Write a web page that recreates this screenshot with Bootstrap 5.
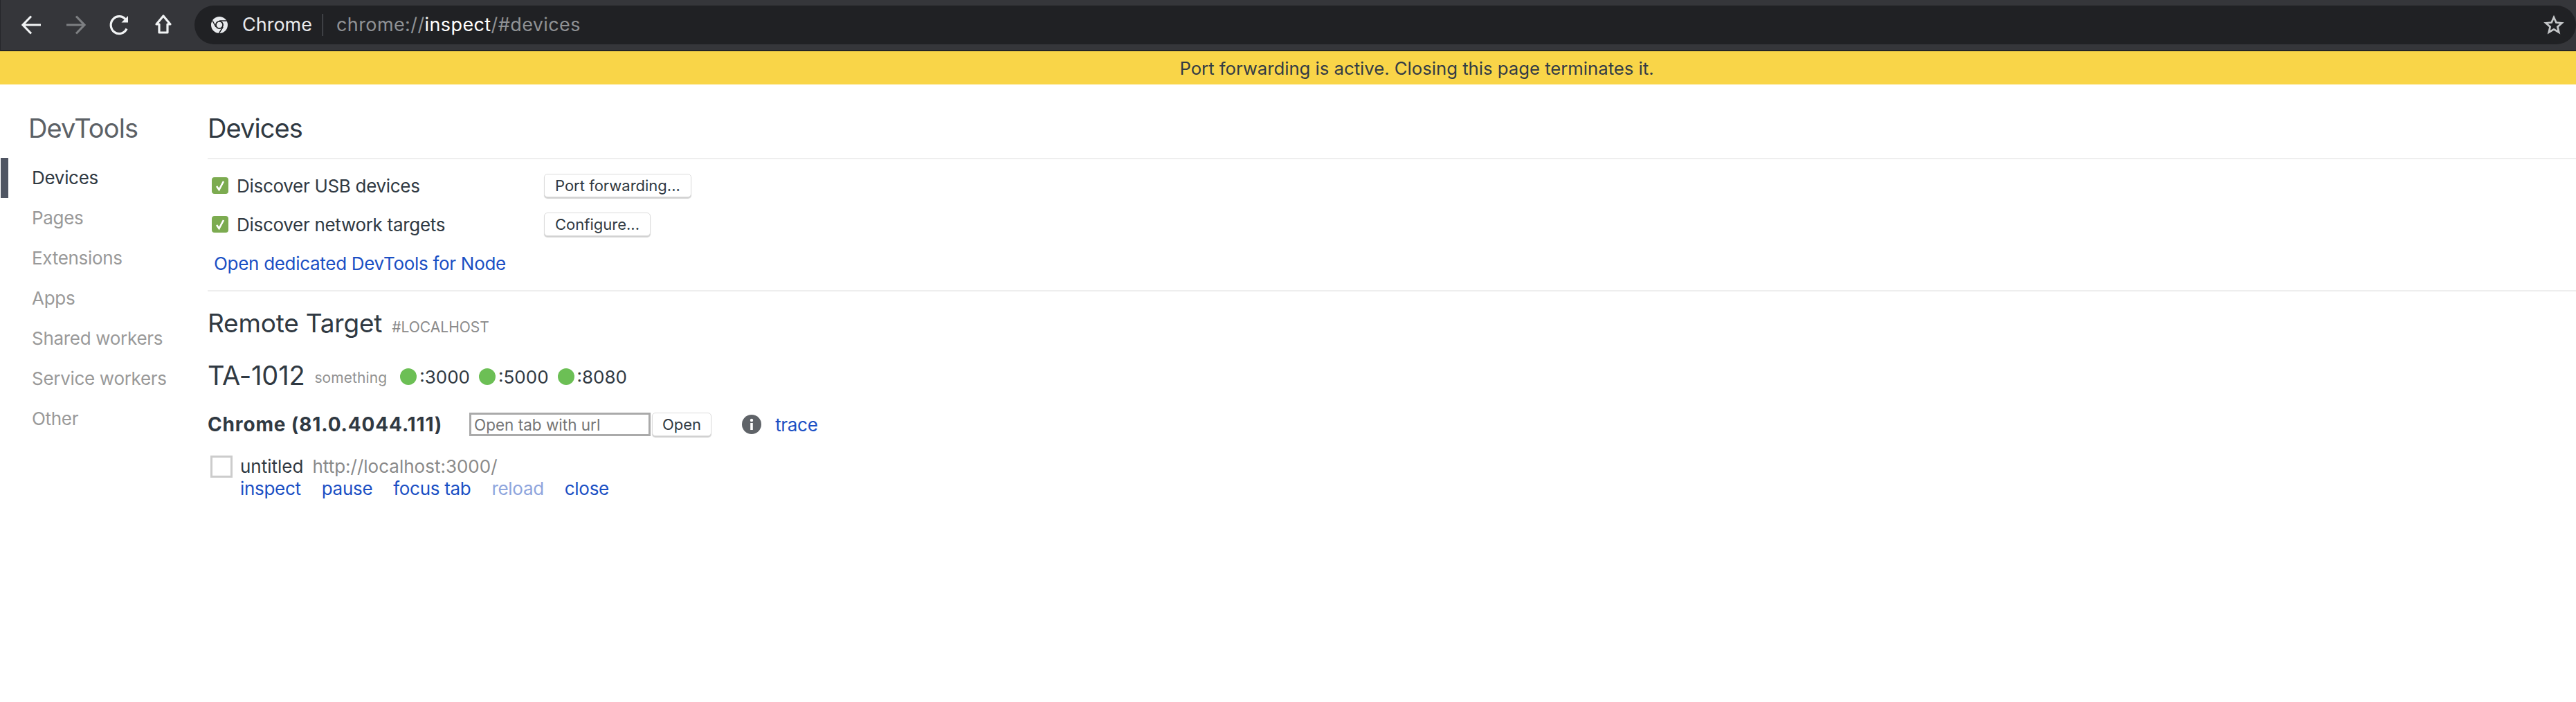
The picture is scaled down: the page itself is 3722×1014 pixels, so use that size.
<!doctype html>
<html lang="en"><head><meta charset="utf-8"><title>Inspect with Chrome Developer Tools</title>
<link href="https://cdn.jsdelivr.net/npm/bootstrap@5.3.0/dist/css/bootstrap.min.css" rel="stylesheet">
<style>
html,body{height:100%}
body{font-family:Inter,"Liberation Sans",sans-serif;font-size:26px;letter-spacing:-.3px;color:#303942;background:#fff;overflow:hidden}
.tbar{height:74px;background:#35363a;border-bottom:2px solid #232427;padding:8px 0 0 30px;border-left:1px solid #26272a}
.tbtn{display:block;flex:none;margin-top:8px}
.fwd{margin-left:37px}.rel{margin-left:33px}.hom{margin-left:35px}
.omni{height:56px;background:#202124;border-radius:28px;margin-left:31px;padding:0 17px 0 24px;font-size:27px;letter-spacing:0;color:#8f9194}
.omni .who{color:#e8eaed;margin-left:21px}
.omni .sep{width:1px;height:32px;background:#5f6368;margin:0 19px 0 15px}
.omni .addr{letter-spacing:.4px}
.omni b{font-weight:400;color:#fff}
.warnbar{height:48px;background:#f9d548;color:#333b45;font-size:25.7px;letter-spacing:0;line-height:49px;text-align:center;padding-left:372px}
.shell{min-height:0}
.side{width:300px;flex:none}
.side h1,.mainp h1{font-size:38px;line-height:50px;font-weight:400;letter-spacing:-.9px;margin:0;padding-top:38px;height:106px}
.side h1{padding-left:41px;color:#5c6166}
.navi{height:58px;line-height:58px;padding-left:46px;color:#999;display:block;text-decoration:none}
.navi.on{color:#303942;border-left:11px solid #4f5562;padding-left:34px;margin-left:1px}
.mainp{min-width:0;flex:1}
.mainp h1{color:#303942}
.rule{height:2px;background:#eee}
.rule2{margin-top:11px}
.setwrap{padding-top:10px}
.setrow{height:56px;padding-left:6px}
.nodelink{padding-left:9px}
.tick{width:24px;height:24px;border-radius:4px;background:#7cab50;flex:none;margin-right:12px}
.lab{width:444px}
.dbtn{font-size:22px;letter-spacing:0;line-height:30px;padding:0 15px;height:34px;background:#fff;color:#303942;border:1px solid #dcdcdc;border-radius:5px;box-shadow:0 2px 1px rgba(0,0,0,.18)}
.dbtn:hover{background:#fff;color:#303942;border-color:#dcdcdc}
a.lnk{color:#1a4fc4;text-decoration:none}
a.off{color:#8ea5dd}
.h2t{font-size:37px;line-height:50px;letter-spacing:-.2px;font-weight:400;margin:21px 0 0}
.tiny{font-size:21px;letter-spacing:0;color:#8a8a8a;margin-left:14px}
.tarow{margin-top:21px;height:50px}
.tname{font-size:38px;line-height:50px;letter-spacing:-.2px;position:relative;top:-2px}
.subt{font-size:21px;letter-spacing:.1px;color:#919191;margin:0 19px 0 14px;position:relative;top:2px}
.dot{width:24px;height:24px;border-radius:50%;background:#6cbf55;display:inline-block;margin-right:4px;flex:none}
.pt{margin-right:13px;font-size:26px;letter-spacing:0}
.brow{margin-top:27px;height:34px}
.bname{font-weight:700;width:378px;font-size:28px;letter-spacing:.85px}
.urlin{width:262px;height:34px;border:3px solid #aaa;padding:0 4px;font-size:22.5px;letter-spacing:0;border-radius:0;outline:0;font-family:inherit;color:#303942}
.urlin::placeholder{color:#757575;opacity:1}
.openb{margin-left:2px;padding:0 14px}
.info{margin:0 20px 0 44px;flex:none}
.pagerow{margin-top:28px;padding-left:4px;line-height:32px;letter-spacing:0}
.favi{width:32px;height:32px;border:3px solid #ccc;flex:none;margin-right:11px}
.ptitle{color:#303942}
.purl{color:#8a8a8a;margin-left:13px}
.acts{padding-left:47px;line-height:32px}
.acts a{margin-right:30px}
</style></head>
<body class="d-flex flex-column">
<div class="tbar d-flex align-items-start">
  <svg class="tbtn" width="28" height="40" viewBox="0 0 28 40" fill="none" stroke="#f1f3f4" stroke-width="3.2"><path d="M28 20H3M14 7.5 2 20l12 12.5"/></svg>
  <svg class="tbtn fwd" width="28" height="40" viewBox="0 0 28 40" fill="none" stroke="#7d7f82" stroke-width="3.2"><path d="M0 20h25M14 7.5 26 20 14 32.5"/></svg>
  <svg class="tbtn rel" width="30" height="40" viewBox="0 0 30 40" fill="none" stroke="#f1f3f4" stroke-width="3.2"><path d="M26 25.5a12 12.5 0 1 1-1-12.5"/><path d="M28 7v9.5h-9.5z" fill="#f1f3f4" stroke="none"/></svg>
  <svg class="tbtn hom" width="28" height="40" viewBox="0 0 28 40" fill="none" stroke="#f1f3f4" stroke-width="3.2" stroke-linejoin="round"><path d="M14 7 4 19h4v12h12V19h4z"/></svg>
  <div class="omni flex-grow-1 d-flex align-items-center">
    <svg width="24" height="24" viewBox="0 0 24 24"><circle cx="12" cy="12" r="12" fill="#e8eaed"/><circle cx="12" cy="12" r="6" fill="#202124"/><circle cx="12" cy="12" r="4.200" fill="#e8eaed"/><path d="M12 6h11M7 15 1.800 5.500M17.200 15 11.500 24" stroke="#202124" stroke-width="1.500"/></svg>
    <span class="who">Chrome</span><span class="sep"></span>
    <span class="addr">chrome://<b>inspect</b>/#devices</span>
    <svg class="ms-auto" width="30" height="30" viewBox="0 0 24 24" fill="none" stroke="#c4c6c8" stroke-width="2.200"><path d="M12 3.200l2.700 6 6.500.6-4.900 4.300 1.500 6.400L12 17.100l-5.800 3.400 1.500-6.400-4.900-4.300 6.500-.6z"/></svg>
  </div>
</div>
<div class="warnbar">Port forwarding is active. Closing this page terminates it.</div>
<div class="shell d-flex flex-grow-1">
  <nav class="side">
    <h1>DevTools</h1>
    <a class="navi on" href="#">Devices</a>
    <a class="navi" href="#">Pages</a>
    <a class="navi" href="#">Extensions</a>
    <a class="navi" href="#">Apps</a>
    <a class="navi" href="#">Shared workers</a>
    <a class="navi" href="#">Service workers</a>
    <a class="navi" href="#">Other</a>
  </nav>
  <main class="mainp">
    <h1>Devices</h1>
    <div class="rule"></div>
    <div class="setwrap">
      <div class="setrow d-flex align-items-center">
        <svg class="tick" viewBox="0 0 24 24"><path d="M7 13l3.500 5L17 6" fill="none" stroke="#fff" stroke-width="2.600"/></svg>
        <span class="lab">Discover USB devices</span>
        <button class="btn dbtn" type="button">Port forwarding...</button>
      </div>
      <div class="setrow d-flex align-items-center">
        <svg class="tick" viewBox="0 0 24 24"><path d="M7 13l3.500 5L17 6" fill="none" stroke="#fff" stroke-width="2.600"/></svg>
        <span class="lab">Discover network targets</span>
        <button class="btn dbtn" type="button">Configure...</button>
      </div>
      <div class="setrow nodelink d-flex align-items-center"><a class="lnk" href="#">Open dedicated DevTools for Node</a></div>
    </div>
    <div class="rule rule2"></div>
    <div class="h2t">Remote Target<span class="tiny">#LOCALHOST</span></div>
    <div class="tarow d-flex align-items-center">
      <span class="tname">TA-1012</span><span class="subt">something</span>
      <span class="dot"></span><span class="pt">:3000</span>
      <span class="dot"></span><span class="pt">:5000</span>
      <span class="dot"></span><span class="pt">:8080</span>
    </div>
    <div class="brow d-flex align-items-center">
      <span class="bname">Chrome (81.0.4044.111)</span>
      <input class="urlin" type="text" placeholder="Open tab with url">
      <button class="btn dbtn openb" type="button">Open</button>
      <svg class="info" width="28" height="28" viewBox="0 0 28 28"><circle cx="14" cy="14" r="14" fill="#5f6368"/><circle cx="14" cy="8" r="2.200" fill="#fff"/><rect x="12.200" y="12" width="3.600" height="10" fill="#fff"/></svg>
      <a class="lnk" href="#">trace</a>
    </div>
    <div class="pagerow d-flex">
      <span class="favi"></span><span class="ptitle">untitled</span><span class="purl">http://localhost:3000/</span>
    </div>
    <div class="acts"><a class="lnk" href="#">inspect</a><a class="lnk" href="#">pause</a><a class="lnk" href="#">focus tab</a><a class="lnk off" href="#">reload</a><a class="lnk" href="#">close</a></div>
  </main>
</div>
<script src="https://cdn.jsdelivr.net/npm/bootstrap@5.3.0/dist/js/bootstrap.bundle.min.js"></script>
</body></html>
